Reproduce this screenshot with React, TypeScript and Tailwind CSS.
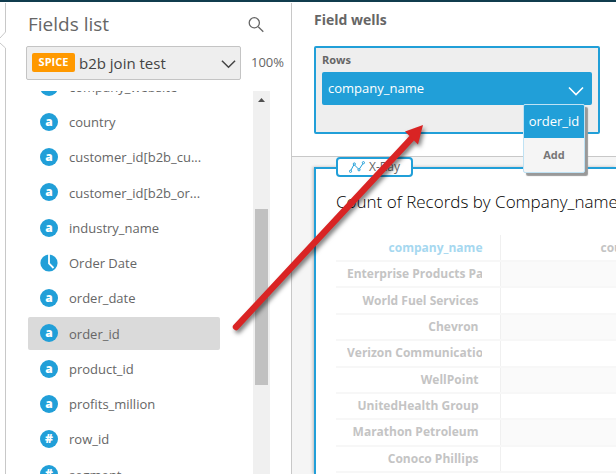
import React from "react";

type FieldKind = "text" | "date" | "number";

interface Field {
  name: string;
  kind: FieldKind;
  selected?: boolean;
}

const fields: Field[] = [
  { name: "company_website", kind: "text" },
  { name: "country", kind: "text" },
  { name: "customer_id[b2b_cu...", kind: "text" },
  { name: "customer_id[b2b_or...", kind: "text" },
  { name: "industry_name", kind: "text" },
  { name: "Order Date", kind: "date" },
  { name: "order_date", kind: "text" },
  { name: "order_id", kind: "text", selected: true },
  { name: "product_id", kind: "text" },
  { name: "profits_million", kind: "text" },
  { name: "row_id", kind: "number" },
  { name: "segment", kind: "number" },
];

const companies = [
  "Enterprise Products Partners",
  "World Fuel Services",
  "Chevron",
  "Verizon Communications",
  "WellPoint",
  "UnitedHealth Group",
  "Marathon Petroleum",
  "Conoco Phillips",
];

function FieldIcon({ kind }: { kind: FieldKind }) {
  if (kind === "date") {
    return (
      <svg className="size-[18px] shrink-0" viewBox="0 0 18 18" aria-hidden="true">
        <circle cx="9" cy="9" r="8.6" fill="#219fd8" />
        <path d="M9 0V9.5L13.5 14" fill="none" stroke="#fff" strokeWidth="1.8" />
      </svg>
    );
  }
  return (
    <span className="flex size-[18px] shrink-0 items-center justify-center rounded-full bg-[#219fd8] font-['Noto_Sans',sans-serif] text-xs leading-none font-black text-white">
      {kind === "text" ? "a" : "#"}
    </span>
  );
}

function Chevron({ className }: { className: string }) {
  return (
    <svg className={className} viewBox="0 0 16 10" fill="none" stroke="currentColor" strokeWidth="1.6" aria-hidden="true">
      <path d="M1 1.5L8 8.5L15 1.5" />
    </svg>
  );
}

function FieldsPanel() {
  return (
    <aside className="flex w-[286px] shrink-0 flex-col border-r border-[#c8c8c8] pl-5">
      <header className="flex h-[43px] shrink-0 items-center justify-between pr-[27px] pl-[2px]">
        <h2 className="text-[19px] text-[#666]">Fields list</h2>
        <button type="button" aria-label="Search fields" className="text-[#666]">
          <svg className="size-4" viewBox="0 0 16 16" fill="none" stroke="currentColor" strokeWidth="1.3">
            <circle cx="6.3" cy="5.8" r="5.1" />
            <path d="M10.2 9.7L15.3 14.8" />
          </svg>
        </button>
      </header>
      <div className="flex shrink-0 items-center gap-[10px]">
        <div className="relative h-[34px] w-[215px] shrink-0">
          <select
            aria-label="Data set"
            className="h-full w-full appearance-none rounded-xs border border-[#c4c4c4] bg-[#eee] pl-[52px] text-[15px] text-[#444]"
          >
            <option>b2b join test</option>
          </select>
          <span className="pointer-events-none absolute top-[7px] left-[6px] flex h-[19px] w-[43px] items-center justify-center rounded-xs bg-[#ff9900] text-[11px] font-bold text-white">
            SPICE
          </span>
          <Chevron className="pointer-events-none absolute top-[13px] right-[5px] h-[10px] w-[15px] text-[#444]" />
        </div>
        <span className="text-[13px] text-[#666]">100%</span>
      </div>
      <div className="mt-[11px] flex min-h-0 flex-1 justify-between pr-[21px] pl-[2px]">
        <div className="overflow-hidden">
          <ul className="-mt-[21px] flex h-[421px] w-48 flex-col justify-between">
            {fields.map((f) => (
              <li
                key={f.name}
                className={
                  f.selected
                    ? "flex h-[33px] items-center gap-[11px] rounded-xs bg-[#dadada] pl-3 text-[13px] text-[#666]"
                    : "flex h-[33px] items-center gap-[11px] pl-3 text-[13px] text-[#666]"
                }
              >
                <FieldIcon kind={f.kind} />
                <span className="pt-[2px] whitespace-nowrap">{f.name}</span>
              </li>
            ))}
          </ul>
        </div>
        <div className="flex w-[17px] flex-col items-center bg-[#f0f0f0] pt-[7px]">
          <svg className="h-1 w-[7px]" viewBox="0 0 7 4" aria-hidden="true">
            <path d="M0 4L3.5 0L7 4Z" fill="#505050" />
          </svg>
          <div className="mt-[107px] h-44 w-[13px] bg-[#c1c1c1]" />
        </div>
      </div>
    </aside>
  );
}

function FieldWells() {
  return (
    <section className="shrink-0 border-b border-[#c8c8c8] pr-4 pb-[22px] pl-[22px]">
      <h2 className="flex h-[43px] items-center pb-[9px] text-sm font-bold text-[#666]">Field wells</h2>
      <div className="relative h-[88px] rounded-xs border-2 border-[#219fd8] bg-[#eee] px-[6px]">
        <h3 className="flex h-6 items-center text-[11px] font-bold text-[#666]">Rows</h3>
        <button
          type="button"
          className="flex h-[33px] w-full items-center justify-between rounded-xs bg-[#219fd8] pr-2 pl-[6px] text-[13px] text-white"
        >
          company_name
          <Chevron className="mt-1 h-[10px] w-4" />
        </button>
        <div className="absolute top-14 right-[13px] z-10 w-[62px] overflow-hidden rounded-xs border border-[#bfe2f4] bg-[#f5f5f5] text-center shadow-[3px_3px_1px_#999]">
          <div className="flex h-[33px] items-center justify-center bg-[#219fd8] text-[13px] font-medium text-white">order_id</div>
          <div className="flex h-[34px] items-center justify-center text-[11px] font-bold text-[#777]">Add</div>
        </div>
      </div>
    </section>
  );
}

function Sheet() {
  return (
    <section className="min-h-0 flex-1 overflow-hidden bg-[#f5f5f5] pt-[10px] pl-[22px]">
      <div className="relative h-full border-t-2 border-l-2 border-[#219fd8] bg-white pt-[22px] pl-5 shadow-[-1px_0_3px_#bbb]">
        <button
          type="button"
          className="absolute -top-[12px] left-5 flex h-5 w-[77px] items-center justify-center gap-1 rounded-sm border-2 border-[#219fd8] bg-white text-xs text-[#666]"
        >
          <svg className="h-3 w-4" viewBox="0 0 16 12" fill="none" stroke="#219fd8" aria-hidden="true">
            <path d="M1.8 9.5L5 3.5L10 8.5L14 2.5" />
            <g fill="#fff">
              <circle cx="1.5" cy="10.3" r="1.1" />
              <circle cx="5.3" cy="3" r="1.1" />
              <circle cx="10" cy="8.8" r="1.1" />
              <circle cx="14.4" cy="1.7" r="1.1" />
            </g>
          </svg>
          X-Ray
        </button>
        <h1 className="h-[22px] text-[17px] leading-[22px] font-light whitespace-nowrap text-black">Count of Records by Company_name</h1>
        <table className="mt-[22px] h-[238px] w-[400px] table-fixed border-collapse text-xs font-bold text-[#c4c4c4]">
          <thead>
            <tr className="h-[26px] border-b-2 border-[#f7f7f7]">
              <th scope="col" className="w-[164px] border-r border-[#f0f0f0] p-0 pr-[17px] text-right text-[#a6d8f0]">
                company_name
              </th>
              <th scope="col" className="p-0 pl-[100px] text-left">
                country
              </th>
            </tr>
          </thead>
          <tbody>
            {companies.map((name) => (
              <tr key={name} className="group h-[26px] border-b-2 border-[#f7f7f7]">
                <th scope="row" className="border-r border-[#f0f0f0] p-0 pr-[18px] pl-[11px] text-right">
                  <div className="overflow-hidden pr-[3px] whitespace-nowrap">{name}</div>
                </th>
                <td className="p-0 group-odd:bg-[#fafafa]" />
              </tr>
            ))}
          </tbody>
        </table>
      </div>
    </section>
  );
}

function DragArrow() {
  return (
    <svg
      className="pointer-events-none absolute top-[107px] left-[220px] z-20 h-[240px] w-[220px] drop-shadow-[2px_3px_2px_rgba(0,0,0,0.5)]"
      viewBox="220 110 220 240"
      aria-hidden="true"
    >
      <path d="M236 328L411 140" stroke="#d92424" strokeWidth="6.4" strokeLinecap="round" />
      <path d="M423 126L405 132.5L418 145.5Z" fill="#d92424" />
    </svg>
  );
}

export default function App() {
  return (
    <div className="relative flex h-screen flex-col overflow-hidden border-t-2 border-[#103c4e] bg-white font-['Open_Sans','Noto_Sans',sans-serif]">
      <div className="flex min-h-0 flex-1 pt-px">
        <svg className="h-full w-[6px] shrink-0" fill="none" stroke="#c8c8c8" aria-hidden="true">
          <path d="M5.5 0V29L0 35M0 40L5.5 45V2000" />
        </svg>
        <FieldsPanel />
        <main className="flex min-w-0 flex-1 flex-col">
          <FieldWells />
          <Sheet />
        </main>
      </div>
      <DragArrow />
    </div>
  );
}
